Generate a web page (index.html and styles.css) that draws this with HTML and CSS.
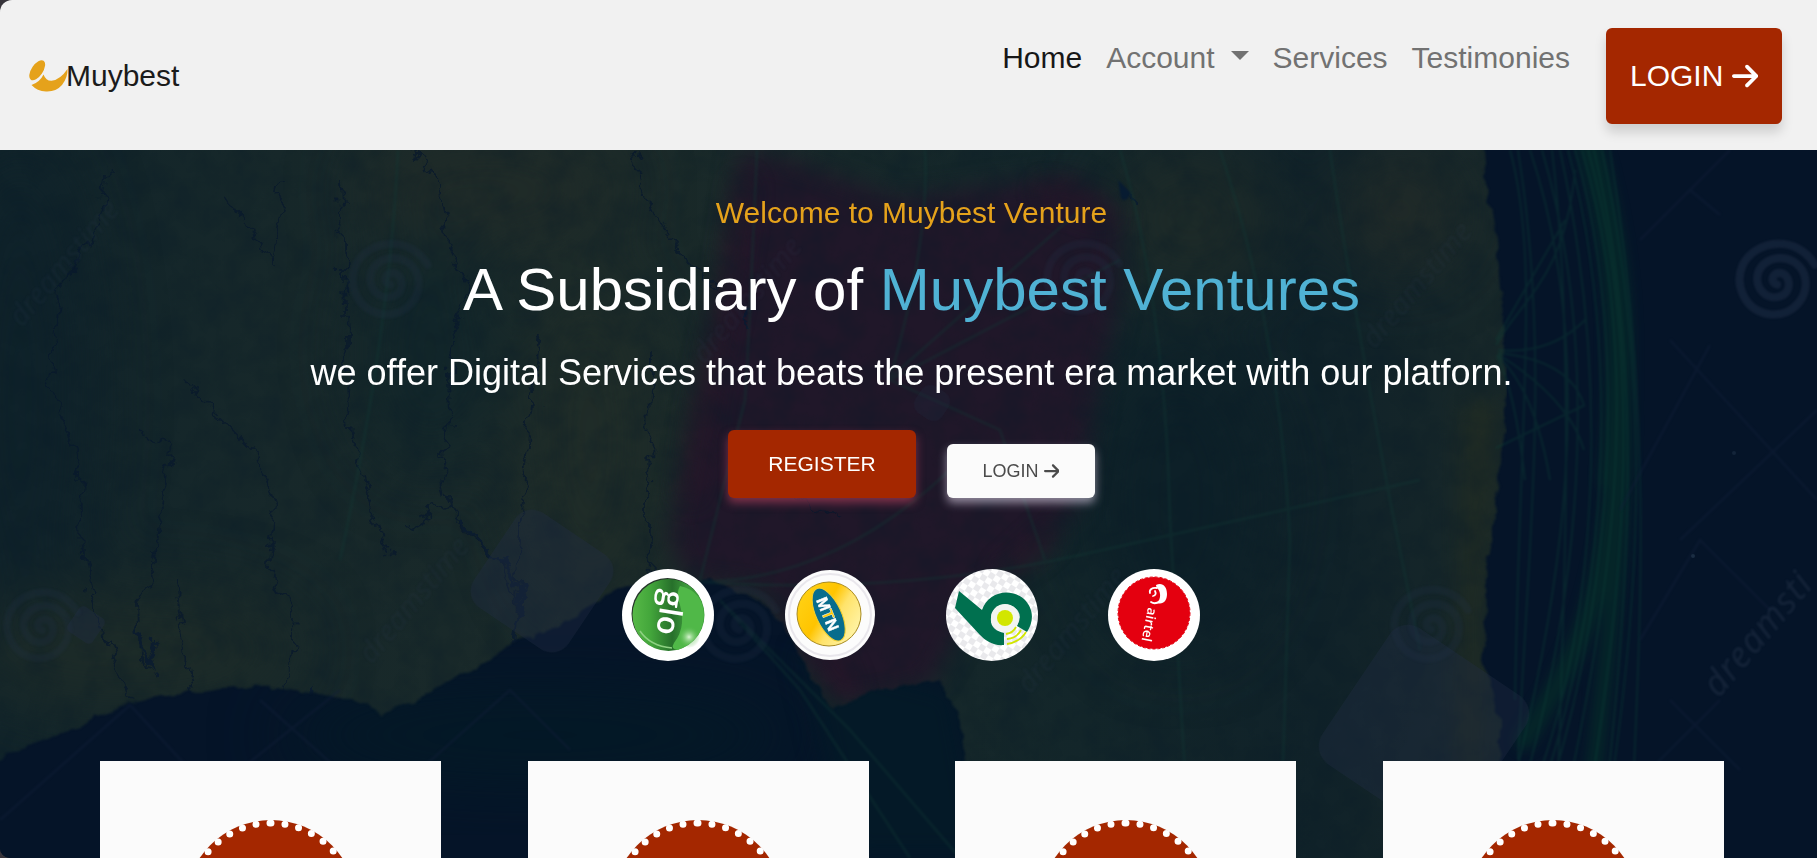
FILE: index.html
```html
<!DOCTYPE html>
<html lang="en">
<head>
<meta charset="utf-8">
<title>Muybest</title>
<link rel="stylesheet" href="styles.css">
</head>
<body>
<svg class="symbols" aria-hidden="true">
  <symbol id="arrow" viewBox="0 0 448 512"><path fill="currentColor" d="M438.600 278.600c12.500-12.500 12.500-32.800 0-45.300l-160-160c-12.500-12.500-32.800-12.500-45.300 0s-12.500 32.800 0 45.300L338.800 224 32 224c-17.700 0-32 14.300-32 32s14.300 32 32 32l306.700 0L233.400 393.400c-12.500 12.500-12.500 32.800 0 45.300s32.800 12.500 45.300 0l160-160z"/></symbol>
  <symbol id="spiral" viewBox="-50 -50 100 100"><path fill="none" stroke="currentColor" stroke-width="9" stroke-linecap="round" d="M0 4C-7 3-7-8 2-9C15-9 17 10 6 16C-10 24-26 8-21-9C-14-30 20-32 30-8C38 16 18 40-8 37C-36 33-48 4-38-18C-24-46 22-52 42-18"/></symbol>
</svg>
<header class="navbar">
  <a class="brand" href="#">
    <svg class="brand-mark" viewBox="0 0 39 32"><ellipse cx="8.200" cy="10.300" rx="5.700" ry="11.400" transform="rotate(34 8.200 10.300)"/><path d="M2.500 25Q11 22 14.500 14.500Q17 21 22.500 20.800Q31 20 38.500 9Q39 17 33 25Q27 32 17 31.500Q8 31 2.500 25Z"/></svg><span>Muybest</span>
  </a>
  <nav class="links">
    <a class="link active" href="#">Home</a>
    <a class="link caret" href="#">Account </a>
    <a class="link" href="#">Services</a>
    <a class="link" href="#">Testimonies</a>
  </nav>
  <a class="btn btn-nav" href="#">LOGIN <svg class="arrow"><use href="#arrow"/></svg></a>
</header>
<main class="hero">
  <svg class="backdrop" viewBox="0 150 1817 708" preserveAspectRatio="none" aria-hidden="true">
    <defs>
      <linearGradient id="land" x1="0" x2="1"><stop offset="0" stop-color="#11242a"/><stop offset=".18" stop-color="#17282a"/><stop offset=".4" stop-color="#1b2a29"/><stop offset=".7" stop-color="#13262a"/><stop offset=".85" stop-color="#102229"/><stop offset="1" stop-color="#1a2929"/></linearGradient>
      <filter id="soft" x="-30%" y="-30%" width="160%" height="160%" color-interpolation-filters="sRGB"><feGaussianBlur stdDeviation="12"/></filter>
      <filter id="edge" x="-30%" y="-10%" width="160%" height="120%" color-interpolation-filters="sRGB"><feGaussianBlur stdDeviation="6"/></filter>
      <filter id="haze" color-interpolation-filters="sRGB"><feGaussianBlur stdDeviation="1"/></filter>
      <filter id="glow" x="-50%" y="-50%" width="200%" height="200%" color-interpolation-filters="sRGB"><feGaussianBlur stdDeviation="35"/></filter>
      <filter id="grain" x="0" y="0" width="100%" height="100%" color-interpolation-filters="sRGB"><feTurbulence type="fractalNoise" baseFrequency=".035" numOctaves="5" seed="4"/><feColorMatrix values="0 0 0 0 .03  0 0 0 0 .1  0 0 0 0 .15  1.6 0 0 0 -.6"/></filter>
      <filter id="crack" x="-5%" y="-5%" width="110%" height="110%" color-interpolation-filters="sRGB"><feTurbulence type="fractalNoise" baseFrequency=".05" numOctaves="4" seed="9"/><feDisplacementMap in="SourceGraphic" scale="26" xChannelSelector="R" yChannelSelector="G"/><feGaussianBlur stdDeviation=".7"/></filter>
      <filter id="shore" x="0" y="0" width="100%" height="100%" color-interpolation-filters="sRGB"><feTurbulence type="fractalNoise" baseFrequency=".06" numOctaves="3" seed="2"/><feDisplacementMap in="SourceGraphic" scale="10" xChannelSelector="R" yChannelSelector="G"/><feGaussianBlur stdDeviation="1.200"/></filter>
      <mask id="coast" maskUnits="userSpaceOnUse" x="0" y="150" width="1817" height="708"><path filter="url(#shore)" fill="#fff" d="M-30 120H1484L1484 150L1488 200L1497 240L1500 290L1506 360L1507 420L1500 470L1494 520L1486 560L1488 610L1482 660L1500 720L1500 890H975L968 770L955 710L940 680L880 690L830 708L806 668L785 625L760 600L715 582L650 582Q620 584 600 600Q582 616 560 625Q540 632 520 640Q490 660 460 675Q434 686 420 700L400 706L382 716Q375 708 360 702Q335 694 310 692Q280 684 250 688Q220 686 200 692Q160 694 120 705Q95 716 80 728Q50 735 30 745L-30 775Z"/></mask>
    </defs>
    <rect y="150" width="1817" height="708" fill="#051428"/>
    <ellipse cx="540" cy="735" rx="260" ry="50" fill="#041926" filter="url(#glow)"/>
    <path d="M800 650L955 690L985 858H850Z" fill="#041927" filter="url(#soft)"/>
    <g mask="url(#coast)">
      <rect y="150" width="1550" height="708" fill="url(#land)"/>
      <g filter="url(#glow)">
        <ellipse cx="20" cy="400" rx="70" ry="260" fill="#0f222a"/>
        <ellipse cx="490" cy="190" rx="130" ry="60" fill="#202b28"/>
        <ellipse cx="590" cy="440" rx="70" ry="170" fill="#1f2c28"/>
        <ellipse cx="130" cy="650" rx="170" ry="60" fill="#1d2b28"/>
        <ellipse cx="430" cy="350" rx="70" ry="120" fill="#12262a"/>
        <ellipse cx="1190" cy="220" rx="90" ry="80" fill="#1d2a28"/>
        <ellipse cx="1180" cy="500" rx="90" ry="150" fill="#0d2028"/>
        <ellipse cx="1400" cy="210" rx="60" ry="60" fill="#222b28"/>
      </g>
      <path filter="url(#soft)" fill="#222c22" opacity=".8" d="M1462 400L1500 400L1484 600L1480 858H1455Z"/>
      <path filter="url(#soft)" d="M742 150L800 165L900 200L1075 175L1120 215L1118 300L1095 400L1080 500L1040 550L975 590L955 640L930 685L840 705L800 660L765 590L690 580L670 540L690 440L720 300Z" fill="#201729"/>
      <g filter="url(#soft)" fill="none" stroke="#2c1528" stroke-width="14" opacity=".7"><path d="M745 180L728 290L705 400L690 500M1040 190L1110 215M1055 530L1000 580M820 630L850 695"/></g>
      <rect y="150" width="1550" height="708" filter="url(#grain)" opacity=".38"/>
      <g fill="none" stroke="#08182c" stroke-width="1.800" filter="url(#crack)" opacity=".75">
        <path d="M105 170L98 230L58 290L50 380L80 470L82 560L90 600L110 650L130 700M185 380L220 420L255 455L275 510L268 570L295 620L290 700M140 430L175 450L160 520L155 560L138 600L140 660L155 678M175 580L190 680L205 770M400 130L440 185L448 240L470 290L450 340L452 420L440 470L446 505L405 530M540 330L530 440L518 560L515 620M446 505L470 535L500 560L515 600M635 150L650 210L690 260L720 290M340 180L345 340L350 440L370 500L390 560M230 200L270 260L285 180M760 480L790 495L840 515M650 350L648 680"/>
        <path stroke-width="3.500" stroke="#081931" d="M138 628L145 660L158 675M155 640L150 665M460 520L505 565L520 592L514 650L500 710M1128 190L1132 208M308 690L310 715M751 300L750 330"/>
      </g>
      <path filter="url(#haze)" d="M1118 180Q1124 186 1131 193Q1126 204 1121 198Z" fill="#071b31"/>
    </g>
    <g fill="none" stroke="#123a36" stroke-width="1.800" opacity=".32" filter="url(#haze)">
      <path stroke-width="3" d="M398 150Q390 330 340 560M757 150Q748 360 745 400L700 580M700 582Q840 580 960 460M700 582Q900 595 1080 555T1420 480M720 600L800 690L910 858M730 610L850 730L960 858M925 150Q930 240 890 378L1080 210M890 380L1120 260M890 380L1000 430L1045 560M1120 150Q1165 300 1170 520L1190 858M1220 150Q1280 330 1290 540L1280 858M1330 150Q1345 260 1390 500L1420 650"/>
    </g>
    <g filter="url(#edge)" fill="none" stroke="#052f29" stroke-linecap="round" opacity=".65"><path stroke-width="26" d="M1585 130C1620 240 1627 350 1612 480"/><path stroke-width="20" d="M1615 480C1600 610 1580 650 1525 740"/><path stroke-width="16" d="M1622 360C1630 500 1610 620 1592 790"/></g>
    <g fill="none" stroke="#0d4038" stroke-width="1.300" opacity=".38" filter="url(#haze)">
      <path stroke-width="2" d="M1510 150C1540 260 1520 400 1515 700M1518 150C1550 350 1530 520 1518 760M1530 150C1600 360 1560 600 1512 790M1542 150C1595 330 1590 560 1520 800M1552 150C1575 340 1565 600 1555 858M1560 150C1610 380 1600 620 1530 800M1568 150C1625 360 1605 620 1535 810M1575 150C1633 350 1610 620 1540 820M1582 150C1650 380 1605 620 1560 830M1588 150C1650 370 1620 620 1580 858M1594 150C1650 390 1625 620 1600 858M1602 150C1655 400 1640 620 1600 858M1610 150C1655 430 1640 620 1630 858M1496 340L1565 220M1496 345C1520 300 1565 280 1575 170M1498 350Q1550 355 1585 320M1498 353Q1570 360 1584 405M1498 354Q1570 400 1584 450M1497 355Q1535 390 1550 480M1497 356Q1515 390 1525 480M1496 448L1585 405"/>
    </g>
    <g fill="none" stroke="#101e37" stroke-width="2.500" opacity=".5" filter="url(#haze)">
      <path d="M0 820L130 705L190 770M240 770L340 690M260 700L350 780M420 770L510 690L570 750M1640 240L1730 150M1690 190L1720 215M1670 340L1817 500M1620 510L1710 345M1680 540L1817 410M1640 640L1700 540L1770 610M1670 700L1740 770M1650 770L1720 700"/>
    </g>
    <g fill="#242f46" opacity=".36">
      <rect x="-57" y="-57" width="114" height="114" rx="20" transform="translate(542 581) rotate(34)"/>
      <rect x="-15" y="-15" width="30" height="30" rx="5" transform="translate(86 625) rotate(34)"/>
      <rect x="-82" y="-82" width="164" height="164" rx="22" transform="translate(1424 730) rotate(34)"/>
      <rect x="-16" y="-16" width="32" height="32" rx="10" transform="translate(932 403) rotate(34)" opacity=".6"/>
    </g>
    <g class="spirals" filter="url(#haze)">
      <use href="#spiral" x="345" y="236" width="90" height="90"/><use href="#spiral" x="1040" y="236" width="86" height="86"/><use class="strong" href="#spiral" x="1732" y="236" width="90" height="90"/>
      <use href="#spiral" x="0" y="585" width="84" height="84"/><use href="#spiral" x="695" y="582" width="88" height="88"/><use href="#spiral" x="1387" y="582" width="88" height="88"/>
    </g>
    <g class="watermark" filter="url(#haze)">
      <text transform="translate(22 328) rotate(-50)">dreamstime</text>
      <text transform="translate(705 365) rotate(-50)">dreamstime</text>
      <text transform="translate(1375 350) rotate(-50)">dreamstime</text>
      <text transform="translate(372 665) rotate(-50)">dreamstime</text>
      <text transform="translate(1030 695) rotate(-50)">dreamstime</text>
      <text class="bright" transform="translate(1719 699) rotate(-50)">dreamsti</text>
    </g>
    <circle cx="1693" cy="556" r="2" fill="#1b2d43"/><circle cx="1734" cy="453" r="2" fill="#142439"/>
  </svg>
  <section class="intro">
    <p class="welcome">Welcome to Muybest Venture</p>
    <h1 class="title">A Subsidiary of <span class="accent">Muybest Ventures</span></h1>
    <p class="lead">we offer Digital Services that beats the present era market with our platforn.</p>
    <div class="actions">
      <a class="btn btn-register" href="#">REGISTER</a>
      <a class="btn btn-login" href="#">LOGIN <svg class="arrow"><use href="#arrow"/></svg></a>
    </div>
    <div class="networks">
      <svg class="network" viewBox="-46 -46 92 92">
        <defs><linearGradient id="g1"><stop offset="0" stop-color="#57b947"/><stop offset=".25" stop-color="#43a63b"/><stop offset=".55" stop-color="#27702b"/><stop offset=".75" stop-color="#3d9a3b"/></linearGradient><radialGradient id="g2"><stop offset="0" stop-color="#d9f5d2"/><stop offset="1" stop-color="#52b848" stop-opacity="0"/></radialGradient></defs>
        <circle r="46" fill="#fff"/><circle cx="-.500" cy="-1" r="36" fill="#26352a"/><circle cx=".500" cy="0" r="36" fill="url(#g1)"/><path d="M12-29Q35-24 36 0Q35 25 10 35Q2 34 6 28Q20 10 10-16Q9-24 12-29Z" fill="#50b848"/><circle cx="21" cy="22" r="11" fill="url(#g2)"/><path d="M-28 16Q-18 31 4 33" fill="none" stroke="#8ed182" stroke-width="1.500"/>
        <text class="glo" transform="translate(-5 -26) rotate(99)">glo</text>
      </svg>
      <svg class="network" viewBox="-46 -46 92 92">
        <defs><linearGradient id="m1" x1="0" y1="0" x2="1" y2=".6"><stop offset="0" stop-color="#ffd51a"/><stop offset=".5" stop-color="#ffc400"/><stop offset=".7" stop-color="#ffe36b"/><stop offset="1" stop-color="#fff2a0"/></linearGradient></defs>
        <circle r="45" fill="#fcfcfc"/><circle r="41" fill="none" stroke="#e9e7ec" stroke-width="2"/><circle cx="-1" cy="-1" r="32" fill="url(#m1)" stroke="#a98b20" stroke-width="1"/>
        <ellipse cx="-1" cy="-1" rx="12.500" ry="28.500" transform="rotate(-25)" fill="#086d8d" stroke="#f4cf2c"/><text class="mtn" transform="translate(-14 -15) rotate(68)">M<tspan fill="#ffcb05">T</tspan>N</text>
      </svg>
      <svg class="network" viewBox="-46 -46 92 92">
        <defs><pattern id="checks" width="12" height="12" patternUnits="userSpaceOnUse" patternTransform="rotate(32)"><rect width="12" height="12" fill="#fff"/><path d="M0 0H6V12H12V6H0Z" fill="#e9e9ec"/></pattern></defs>
        <circle r="46" fill="url(#checks)"/><path d="M-33-24L-10-5C-4-23 18-28 32-16C42-6 42 6 35 17L25 11Q30 2 26-4C20-13 5-13 0-2C-4 11 3 16 12 18V30C1 31-6 26-12 20L-37-7Z" fill="#00704f"/><circle cx="13" cy="3" r="14" fill="#f3f5f1"/><circle cx="13" cy="3" r="8" fill="#d2e600"/><g fill="none" stroke="#d2e600" stroke-width="1.800"><path d="M14 19Q21 18 24 12M15 24Q25 23 29 15M15 29Q28 27 34 17"/></g>
      </svg>
      <svg class="network" viewBox="-46 -46 92 92">
        <circle r="46" fill="#fff"/><circle r="36" cy="-2" fill="#e4000f" stroke="#e4000f" stroke-dasharray="3 2"/><path d="M2-30C8-33 13-29 13-21C13-14 9-10 3-12C7-16 7-22 4-26C3-28 2-28 2-30Z" fill="#fff"/><path d="M3-27C-2-28-5-25-4-22M1-24Q3-20-1-19M6-14Q1-10-3-13" fill="none" stroke="#fff" stroke-width="1.800" stroke-linecap="round"/><text class="airtel" transform="translate(-6 -8) rotate(101)">airtel</text>
      </svg>
    </div>
  </section>
  <section class="cards">
    <article class="card"><div class="medal"></div></article>
    <article class="card"><div class="medal"></div></article>
    <article class="card"><div class="medal"></div></article>
    <article class="card"><div class="medal"></div></article>
  </section>
</main>
</body>
</html>
```
FILE: styles.css
```css
* { box-sizing: border-box; }
html { background: #37343a; }
body {
  margin: 0;
  height: 858px;
  overflow: hidden;
  display: flex;
  flex-direction: column;
  border-radius: 12px 0 0 10px;
  font-family: "Liberation Sans", Arial, sans-serif;
}
a { color: inherit; text-decoration: none; }
.symbols { display: none; }
.navbar {
  flex: none;
  height: 150px;
  padding: 28px 35px 26px 29px;
  display: flex;
  align-items: flex-start;
  background: #f1f1f1;
  font-size: 30px;
  line-height: 45px;
}
.brand { display: flex; align-items: flex-start; color: #1b1b1b; padding-top: 25px; }
.brand-mark { width: 39px; height: 32px; margin-top: 7px; margin-right: -2px; fill: #e5a21b; }
.links { margin-left: auto; margin-right: 36px; padding-top: 7px; display: flex; gap: 24px; }
.link { color: #727272; white-space: pre; }
.active { color: #171717; }
.caret::after {
  content: "";
  display: inline-block;
  margin-left: .255em;
  vertical-align: .255em;
  border-top: .3em solid;
  border-left: .3em solid transparent;
  border-right: .3em solid transparent;
}
.btn { display: inline-flex; align-items: center; justify-content: center; white-space: pre; border-radius: 6px; }
.arrow { width: .875em; height: 1em; }
.btn-nav { width: 176px; height: 96px; padding-bottom: 1px; background: #a42700; color: #fff; box-shadow: 0 8px 12px rgba(0, 0, 0, .15); }
.hero { position: relative; flex: 1; min-height: 0; display: flex; flex-direction: column; background: #051428; overflow: hidden; }
.backdrop { position: absolute; inset: 0; width: 100%; height: 100%; }
.spirals { color: #24344a; opacity: .22; }
.strong { color: #42516e; }
.watermark { font: italic 29px "Noto Sans", sans-serif; fill: #33415a; opacity: .15; }
.bright { font-size: 36px; letter-spacing: 1px; fill: #6c7a94; }
.intro { position: relative; height: 611px; display: flex; flex-direction: column; align-items: center; padding: 40px 0 0 6px; }
.welcome, .title, .lead { margin: 0; font-weight: 400; white-space: nowrap; }
.welcome { font-size: 30px; line-height: 45px; color: #e5a21b; }
.title { margin-top: 19px; font-size: 60px; line-height: 72px; color: #fff; }
.accent { color: #50b2d4; }
.lead { margin-top: 20px; font-size: 36px; line-height: 54px; color: #fff; }
.actions { margin-top: 30px; display: flex; align-items: flex-end; gap: 31px; }
.btn-register { width: 188px; height: 68px; font-size: 21px; background: #a42700; color: #fff; box-shadow: 0 5px 10px rgba(190, 65, 95, .6); }
.btn-login { width: 148px; height: 54px; font-size: 18px; background: #fbfbfb; color: #4b4b4b; box-shadow: 0 5px 10px rgba(225, 215, 235, .6); }
.networks { margin-top: 71px; margin-right: 2px; display: flex; gap: 70px; }
.network { width: 92px; height: 92px; }
.glo { font: 600 31px "Open Sans", sans-serif; fill: #fff; }
.mtn { font: bold 16px "Liberation Sans", Arial, sans-serif; fill: #fff; stroke: #fff; stroke-width: .4px; }
.airtel { font: 600 13.500px "Open Sans", sans-serif; fill: #fff; }
.cards { position: relative; display: grid; grid-template-columns: repeat(4, 341px); justify-content: space-between; padding: 0 93px 0 100px; }
.card { height: 97px; padding-top: 59px; overflow: hidden; display: flex; justify-content: center; background: #fbfbfb; }
.medal { flex: none; width: 172px; height: 172px; border: 7px dotted #fff; border-radius: 50%; background: #a42700; }
```
